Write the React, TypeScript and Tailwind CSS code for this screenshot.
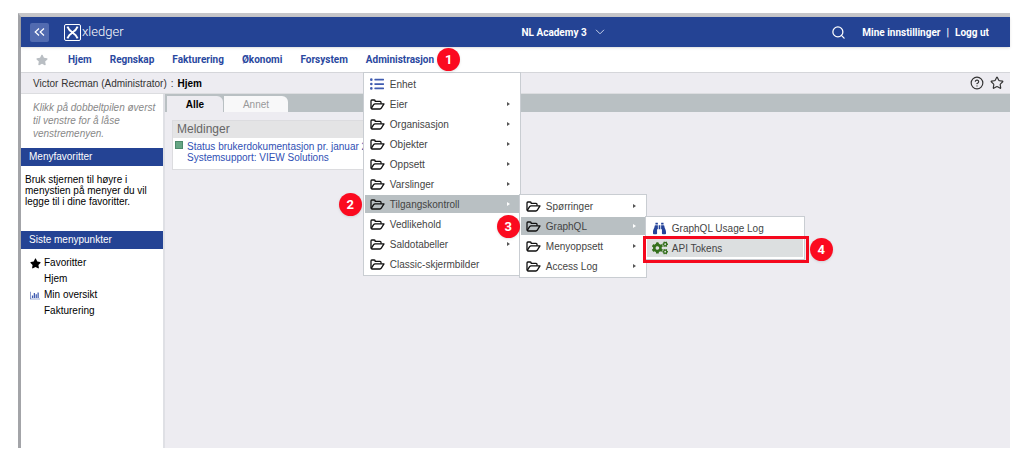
import type { ReactNode } from "react";
import { CircleHelp, Search, Star } from "lucide-react";
import { FaBinoculars, FaCogs, FaListUl, FaStar } from "react-icons/fa";

const navItems = ["Hjem", "Regnskap", "Fakturering", "Økonomi", "Forsystem"];

function FolderIcon() {
  return (
    <svg
      viewBox="0 0 15 11"
      className="mt-px h-[11px] w-[15px]"
      fill="none"
      stroke="#111"
      strokeWidth="1.3"
      strokeLinejoin="round"
    >
      <path d="M1 9.300V1.900Q1 1 1.900 1H4.300Q5.200 1 5.200 1.900V2.400H10.100Q11 2.400 11 3.300V4.800" />
      <path d="M1 9.800L3.600 5.700Q4.200 4.900 5.100 4.900H14L11.300 9.200Q10.800 10 9.900 10H1.300" />
    </svg>
  );
}

function ChartIcon() {
  return (
    <svg viewBox="0 0 2048 1792" className="h-[9px] w-[10px] fill-[#3f5bb0]">
      <path d="M640 896v512h-256v-512h256zm384-512v1024h-256v-1024h256zm1024 1152v128h-2048v-1536h128v1408h1920zm-640-896v768h-256v-768h256zm384-384v1152h-256v-1152h256z" />
    </svg>
  );
}

function Logo() {
  return (
    <a href="#" className="flex items-center text-white" aria-label="xledger">
      <svg viewBox="0 0 17 17" className="size-[17px]" fill="none" stroke="white">
        <rect x="0.5" y="0.5" width="16" height="16" rx="1.5" />
        <path
          d="M3.400 2.600C4.800 5.600 6.200 7 7.600 7.600M13.600 2.600C12.200 5.600 10.800 7 9.400 7.600M3.400 14.400C4.800 11.400 6.200 10 7.600 9.400M13.600 14.400C12.200 11.400 10.800 10 9.400 9.400"
          strokeWidth="2"
        />
        <path d="M7 7h3v3H7z" fill="white" stroke="none" />
      </svg>
      <span className="pl-px text-[13px] leading-4 font-light">xledger</span>
    </a>
  );
}

function Badge({ n, className }: { n: number; className: string }) {
  return (
    <span
      className={`absolute z-30 flex size-[23px] items-center justify-center rounded-full bg-[#fb0a1f] font-[Roboto,sans-serif] text-[13px] font-bold text-white shadow ${className}`}
    >
      {n}
    </span>
  );
}

type MenuItemProps = {
  label: string;
  icon?: ReactNode;
  arrow?: boolean;
  active?: boolean;
  activeClass?: string;
  children?: ReactNode;
};

function MenuItem({ label, icon, arrow, active, activeClass = "bg-[#b9c0c3]", children }: MenuItemProps) {
  return (
    <li className="relative py-px">
      <a href="#" className={`flex h-[18px] items-center pr-[9px] pl-[5px] ${active ? activeClass : ""}`}>
        <span className="flex w-5 shrink-0 items-center">{icon ?? <FolderIcon />}</span>
        <span className="grow whitespace-nowrap">{label}</span>
        {arrow && (
          <svg viewBox="0 0 3 4" className={`h-1 w-[3px] ${active ? "fill-white" : "fill-[#555]"}`}>
            <path d="M0 0L3 2L0 4z" />
          </svg>
        )}
      </a>
      {children}
    </li>
  );
}

function Menu({ className, children }: { className: string; children: ReactNode }) {
  return (
    <ul
      className={`absolute z-20 border border-[#c9cdd2] bg-white p-px font-['Liberation_Sans',sans-serif] text-[10px] font-normal text-[#444] ${className}`}
    >
      {children}
    </ul>
  );
}

function AdminMenu() {
  return (
    <Menu className="top-full -left-[3px] w-[158px]">
      <MenuItem label="Enhet" icon={<FaListUl className="size-[14px] text-[#3f5bb0]" />} />
      <MenuItem label="Eier" arrow />
      <MenuItem label="Organisasjon" arrow />
      <MenuItem label="Objekter" arrow />
      <MenuItem label="Oppsett" arrow />
      <MenuItem label="Varslinger" arrow />
      <MenuItem label="Tilgangskontroll" arrow active>
        <Badge n={2} className="-top-px -left-[26px]" />
        <Menu className="top-0 left-full w-32">
          <MenuItem label="Spørringer" arrow />
          <MenuItem label="GraphQL" arrow active>
            <Badge n={3} className="-top-px -left-6" />
            <Menu className="top-0 left-full w-40">
              <MenuItem
                label="GraphQL Usage Log"
                icon={<FaBinoculars className="ml-px size-[13px] text-[#24439a]" />}
              />
              <MenuItem
                label="API Tokens"
                active
                activeClass="bg-[#dcdfe0]"
                icon={<FaCogs className="size-4 text-[#34701c]" />}
              >
                <span className="pointer-events-none absolute -top-[2px] -right-[6px] -bottom-[5px] -left-1 border-[3px] border-[#f5081d]" />
                <Badge n={4} className="top-0 -right-[30px]" />
              </MenuItem>
            </Menu>
          </MenuItem>
          <MenuItem label="Menyoppsett" arrow />
          <MenuItem label="Access Log" arrow />
        </Menu>
      </MenuItem>
      <MenuItem label="Vedlikehold" />
      <MenuItem label="Saldotabeller" arrow />
      <MenuItem label="Classic-skjermbilder" />
    </Menu>
  );
}

function Header() {
  return (
    <header className="relative grid h-[30px] grid-cols-2 items-center bg-[#244394] font-[Roboto,sans-serif] font-bold text-white shadow">
      <div className="flex items-center gap-[15px] pl-[9px]">
        <button
          type="button"
          aria-label="Meny"
          className="flex size-[19px] items-center justify-center rounded-xs bg-[#516bb0]"
        >
          <svg viewBox="0 0 11 8" className="h-2 w-[11px]" fill="none" stroke="white" strokeWidth="1.2">
            <path d="M5 0.500L1.200 4L5 7.500M10 0.500L6.200 4L10 7.500" />
          </svg>
        </button>
        <Logo />
      </div>
      <div className="flex items-center justify-between pr-[21px] pl-[6px]">
        <button type="button" className="flex items-center gap-2">
          NL Academy 3
          <svg viewBox="0 0 10 6" className="h-[6px] w-[10px]" fill="none" stroke="#c5cfe8">
            <path d="M1 0.800L5 4.800L9 0.800" />
          </svg>
        </button>
        <div className="flex items-center">
          <button type="button" aria-label="Søk" className="mr-4">
            <Search className="size-[15px]" strokeWidth={2} />
          </button>
          <a href="#">Mine innstillinger</a>
          <span className="px-[6px]">|</span>
          <a href="#">Logg ut</a>
        </div>
      </div>
    </header>
  );
}

function Sidebar() {
  return (
    <aside className="w-[144px] shrink-0 border-r-2 border-[#dfe0e5] bg-white text-black">
      <p className="px-3 pt-[7px] pb-2 leading-[13px] whitespace-nowrap text-[#888] italic">
        Klikk på dobbeltpilen øverst
        <br />
        til venstre for å låse
        <br />
        venstremenyen.
      </p>
      <h2 className="h-[18px] bg-[#244394] px-2 leading-[18px] text-white">Menyfavoritter</h2>
      <p className="px-1 pt-2 pb-6 leading-[11px]">
        Bruk stjernen til høyre i menystien på menyer du vil legge til i dine favoritter.
      </p>
      <h2 className="h-[18px] bg-[#244394] px-2 leading-[18px] text-white">Siste menypunkter</h2>
      <ul className="px-[9px] pt-[6px] leading-4">
        <li className="flex items-center">
          <span className="w-[14px]">
            <FaStar className="size-[11px]" />
          </span>
          <a href="#">Favoritter</a>
        </li>
        <li className="pl-[14px]">
          <a href="#">Hjem</a>
        </li>
        <li className="flex items-center">
          <span className="w-[14px]">
            <ChartIcon />
          </span>
          <a href="#">Min oversikt</a>
        </li>
        <li className="pl-[14px]">
          <a href="#">Fakturering</a>
        </li>
      </ul>
    </aside>
  );
}

export default function App() {
  return (
    <div className="flex min-h-screen flex-col bg-white pt-[13px] pr-[14px] pb-[15px] pl-[18px] font-['Liberation_Sans',sans-serif] text-[10px]">
      <div className="flex grow flex-col border-t-4 border-l-[3px] border-t-[#c6c6c9] border-l-[#a3a4a8]">
        <Header />

        <nav className="flex h-[26px] items-center border-b border-[#d5d6da] bg-white font-[Roboto,sans-serif] font-bold text-[#2a48a0]">
          <button type="button" aria-label="Favoritt" className="pr-5 pl-[15px]">
            <FaStar className="size-3 text-[#b9bec3]" />
          </button>
          <ul className="flex h-full items-center gap-[18px]">
            {navItems.map((item) => (
              <li key={item}>
                <a href="#">{item}</a>
              </li>
            ))}
            <li className="relative flex h-full items-center">
              <a href="#">Administrasjon</a>
              <Badge n={1} className="top-px -right-[26px]" />
              <AdminMenu />
            </li>
          </ul>
        </nav>

        <div className="flex h-[21px] items-center justify-between border-b border-[#dcdde0] bg-[#edecf1] pr-[6px] pl-3 text-[#333]">
          <div>
            Victor Recman (Administrator)<span className="px-1">:</span>
            <b className="text-black">Hjem</b>
          </div>
          <div className="flex items-center gap-[6px]">
            <button type="button" aria-label="Hjelp">
              <CircleHelp className="size-[14px]" />
            </button>
            <button type="button" aria-label="Legg til favoritt">
              <Star className="size-[14px]" />
            </button>
          </div>
        </div>

        <div className="flex grow">
          <Sidebar />
          <main className="grow bg-[#edecf1]">
            <div className="flex h-[18px] items-end gap-px bg-[#b9c0c3] pl-[2px]">
              <button type="button" className="h-4 w-14 rounded-tr-md bg-[#edecf1] font-bold text-black">
                Alle
              </button>
              <button type="button" className="h-4 w-16 rounded-tr-md bg-[#f8f8f9] text-[#999]">
                Annet
              </button>
            </div>
            <section className="mt-2 ml-[7px] w-80 border border-[#dcdcdf] bg-white">
              <h2 className="h-[17px] bg-[#e4e4e5] px-1 text-[12px] leading-[17px] text-[#666]">Meldinger</h2>
              <div className="flex gap-1 px-[2px] pt-[3px] pb-[6px]">
                <span className="size-2 shrink-0 border border-[#4d8a6c] bg-[#66a684]" />
                <a href="#" className="leading-[11px] text-[#3050b4]">
                  Status brukerdokumentasjon pr. januar 20
                  <br />
                  Systemsupport: VIEW Solutions
                </a>
              </div>
            </section>
          </main>
        </div>
      </div>
    </div>
  );
}
